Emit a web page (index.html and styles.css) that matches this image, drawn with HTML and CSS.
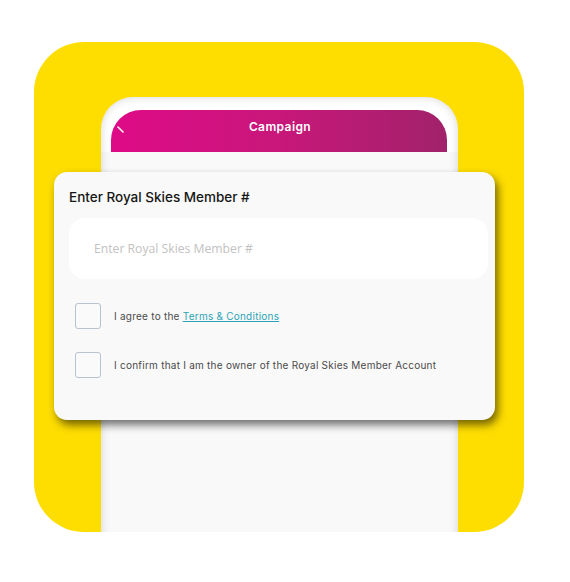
FILE: index.html
```html
<!DOCTYPE html>
<html lang="en">
<head>
<meta charset="utf-8">
<title>Campaign</title>
<link rel="stylesheet" href="styles.css">
</head>
<body>
<div class="stage">
  <div class="tile">
    <div class="phone">
      <div class="header">
        <svg class="back" width="12" height="14" viewBox="0 0 12 14"><path d="M2 5 L7 10" stroke="#fff" stroke-width="1.6" stroke-linecap="round" fill="none"/></svg>
        <span class="header-title">Campaign</span>
      </div>
    </div>
    <div class="card">
      <div class="card-title">Enter Royal Skies Member #</div>
      <div class="input"><span class="placeholder">Enter Royal Skies Member #</span></div>
      <div class="checks">
        <div class="check-row">
          <span class="box"></span>
          <span class="check-text">I agree to the <a class="link" href="#">Terms &amp; Conditions</a></span>
        </div>
        <div class="check-row">
          <span class="box"></span>
          <span class="check-text">I confirm that I am the owner of the Royal Skies Member Account</span>
        </div>
      </div>
    </div>
  </div>
</div>
</body>
</html>
```

FILE: styles.css
```css
html, body {
  margin: 0;
  padding: 0;
  background: #ffffff;
}
.stage {
  padding: 42px 0 0 34px;
}
.tile {
  position: relative;
  width: 490px;
  height: 490px;
  border-radius: 50px;
  background: #fedd00;
  overflow: hidden;
}
.phone {
  margin: 55px 0 0 67px;
  width: 357px;
  height: 520px;
  box-sizing: border-box;
  padding: 13px 11px 0 10px;
  border-radius: 32px 32px 0 0;
  background: linear-gradient(#ffffff 0, #ffffff 55px, #f9f9f9 55px);
  box-shadow: inset 0 0 10px rgba(0, 0, 0, 0.16);
}
.header {
  position: relative;
  height: 42px;
  border-radius: 30px 30px 0 0;
  background: linear-gradient(90deg, #de0a87 0%, #c8177a 50%, #a1226a 100%);
  display: flex;
  justify-content: center;
  align-items: center;
  overflow: hidden;
}
.back {
  position: absolute;
  left: 5px;
  top: 12px;
}
.header-title {
  font-family: Inter, "Liberation Sans", sans-serif;
  font-weight: 600;
  font-size: 12px;
  color: #ffffff;
  letter-spacing: 0.4px;
  margin: -10px 0 0 2px;
}
.card {
  position: absolute;
  left: 20px;
  top: 130px;
  width: 441px;
  height: 248px;
  box-sizing: border-box;
  padding: 17px 7px 0 15px;
  background: #f9f9f9;
  border-radius: 13px;
  box-shadow: 3px 5px 8px rgba(0, 0, 0, 0.55);
}
.card-title {
  font-family: Inter, "Liberation Sans", sans-serif;
  font-weight: 500;
  font-size: 13.5px;
  color: #161616;
  line-height: 16px;
}
.input {
  margin-top: 13px;
  height: 61px;
  border-radius: 16px;
  background: #ffffff;
  display: flex;
  align-items: center;
  padding-left: 25px;
}
.placeholder {
  font-family: "Open Sans", sans-serif;
  font-size: 12.2px;
  color: #c2c2c2;
}
.checks {
  margin-top: 24px;
  padding-left: 6px;
  display: flex;
  flex-direction: column;
  gap: 23px;
}
.check-row {
  display: flex;
  align-items: center;
  gap: 13px;
}
.box {
  width: 26px;
  height: 26px;
  box-sizing: border-box;
  border: 1.6px solid #b8c3cf;
  border-radius: 3px;
  background: #fafafa;
  flex: none;
}
.check-text {
  font-family: Inter, "Liberation Sans", sans-serif;
  font-size: 10px;
  color: #4a4a4a;
  letter-spacing: 0.24px;
  margin-top: -1px;
}
.link {
  color: #2aa4b6;
  text-decoration: underline;
}
```
